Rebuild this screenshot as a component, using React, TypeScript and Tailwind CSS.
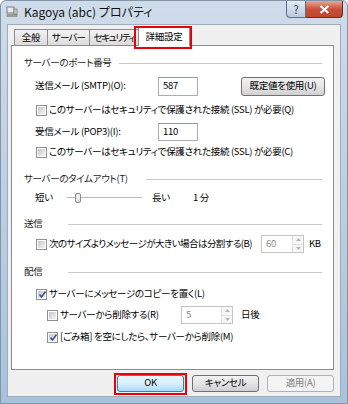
import React from 'react';

const FONT = "font-['Noto_Sans_CJK_JP','Liberation_Sans',sans-serif] [font-feature-settings:'palt']";

function Check({ checked }: { checked?: boolean }) {
  return (
    <span className="relative w-[11px] h-[11px] shrink-0 border border-[#8e8f8f] bg-white flex items-center justify-center">
      <span className="w-[7px] h-[7px] bg-gradient-to-br from-[#c3c7cc] to-[#f4f4f5]" />
      {checked && (
        <svg className="absolute left-[1px] top-[0px]" width="9" height="9" viewBox="0 0 9 9">
          <path d="M1.5 4.5 L3.5 7 L7.5 1.5" fill="none" stroke="#3a5494" strokeWidth="1.6" />
        </svg>
      )}
    </span>
  );
}

function CheckRow({ checked, label, indent }: { checked?: boolean; label: string; indent?: boolean }) {
  return (
    <div className={`flex items-center h-[18px] ${indent ? 'pl-[35px]' : 'pl-[24px]'}`}>
      <Check checked={checked} />
      <span className="ml-[2px] whitespace-nowrap">{label}</span>
    </div>
  );
}

function Header({ label, width, mt }: { label: string; width: string; mt: string }) {
  return (
    <div className={`flex items-center h-[18px] pl-[12px] pr-[11px] ${mt}`}>
      <span className={`${width} shrink-0 whitespace-nowrap text-[#1e1e1e]`}>{label}</span>
      <span className="flex-1 h-px bg-[#c6c8cb]" />
    </div>
  );
}

function Spin({ value, width }: { value: string; width: string }) {
  return (
    <div className={`${width} h-[18px] border border-[#c2c4c8] bg-white flex items-stretch`}>
      <span className="flex-1 pl-[4px] text-[#8d8d8d] flex items-center">{value}</span>
      <div className="w-[11px] flex flex-col border-l border-[#e0e0e0]">
        <span className="flex-1 flex items-center justify-center border-b border-[#e0e0e0] bg-[#f7f7f7]">
          <svg width="5" height="3" viewBox="0 0 5 3"><path d="M0 3 L2.5 0 L5 3Z" fill="#b5b5b5" /></svg>
        </span>
        <span className="flex-1 flex items-center justify-center bg-[#f7f7f7]">
          <svg width="5" height="3" viewBox="0 0 5 3"><path d="M0 0 L2.5 3 L5 0Z" fill="#b5b5b5" /></svg>
        </span>
      </div>
    </div>
  );
}

function Btn({ label, kind }: { label: string; kind?: 'ok' | 'off' }) {
  const style =
    kind === 'ok'
      ? 'border-[#3c7fb1] bg-gradient-to-b from-[#eaf6fd] via-[#d9f0fc] to-[#a7d9f5]'
      : kind === 'off'
        ? 'border-[#adb2b5] bg-[#f4f4f4] text-[#838383]'
        : 'border-[#707070] bg-gradient-to-b from-[#f2f2f2] via-[#e5e5e5] to-[#cfcfcf]';
  return (
    <div className={`w-[67px] h-[17px] rounded-[3px] border flex items-center justify-center whitespace-nowrap ${style}`}>
      {label}
    </div>
  );
}

const tabCls = 'h-[16px] border border-b-0 border-[#898c95] bg-gradient-to-b from-[#f3f3f3] to-[#dcdcdc] flex items-center justify-center whitespace-nowrap';

export default function App() {
  return (
    <div className={`w-[348px] h-[404px] ${FONT} text-[9.5px] tracking-[-0.3px] leading-none text-black bg-gradient-to-b from-[#cfdcea] via-[#bccfe3] to-[#a9c2dc] rounded-t-[6px] border border-[#8194a8] flex flex-col overflow-hidden`}>
      {/* title bar */}
      <div className="h-[22px] flex items-start shrink-0">
        <div className="flex items-center h-[22px] pl-[5px]">
          <svg width="12" height="12" viewBox="0 0 12 12">
            <rect x="1" y="1" width="7" height="6" fill="#e8e8e8" stroke="#7d7d7d" />
            <rect x="0.5" y="8" width="11" height="3" fill="#9b9b9b" />
            <rect x="8" y="3" width="3" height="5" fill="#c9c9c9" stroke="#6e6e6e" strokeWidth="0.6" />
          </svg>
          <span className="ml-[6px] text-[12px] tracking-normal text-[#111]">Kagoya (abc) プロパティ</span>
        </div>
        <div className="ml-auto mr-[4px] flex">
          <div className="w-[20px] h-[17px] rounded-bl-[4px] border border-t-0 border-[#5d6f86] bg-gradient-to-b from-[#e4ecf5] to-[#b9c9dc] flex items-center justify-center text-[11px] text-[#2d3c52]">?</div>
          <div className="w-[37px] h-[17px] rounded-br-[4px] border border-t-0 border-l-0 border-[#6b2a22] bg-gradient-to-b from-[#e4a79b] via-[#c8503a] to-[#c4432d] flex items-center justify-center">
            <svg width="11" height="9" viewBox="0 0 11 9">
              <path d="M1.5 1 L9.5 8 M9.5 1 L1.5 8" stroke="#fff" strokeWidth="2.2" />
            </svg>
          </div>
        </div>
      </div>

      {/* client */}
      <div className="mx-[6px] mt-[1px] h-[373px] bg-[#f0f0f0] border border-[#a0acb8] flex flex-col relative">
        {/* tabs */}
        <div className="h-[20px] flex items-end pl-[6px] relative z-10">
          <div className={`${tabCls} w-[34px]`}>全般</div>
          <div className={`${tabCls} w-[42px] border-l-0 tracking-[-0.8px]`}>サーバー</div>
          <div className={`${tabCls} w-[49px] border-l-0 tracking-[-1.4px]`}>セキュリティ</div>
          <div className="w-[52px] h-[19px] -mb-px -ml-px border border-b-0 border-[#898c95] bg-white flex items-center justify-center whitespace-nowrap">詳細設定</div>
        </div>
        <div className="absolute left-[126px] top-[1px] w-[58px] h-[23px] border-2 border-[#e8000b] z-20" />

        {/* panel */}
        <div className="ml-[3px] mr-[6px] h-[325px] border border-[#898c95] bg-white flex flex-col pt-[8px]">
          <Header label="サーバーのポート番号" width="w-[95px]" mt="" />
          <div className="flex items-center h-[18px] pl-[23px] mt-[5px]">
            <span className="w-[123px] shrink-0 whitespace-nowrap">送信メール (SMTP)(O):</span>
            <span className="w-[40px] h-[19px] border border-[#abadb3] border-t-[#8b9ab1] bg-white pl-[4px] flex items-center">587</span>
            <span className="ml-[43px]">
              <span className="w-[84px] h-[19px] rounded-[3px] border border-[#707070] bg-gradient-to-b from-[#f2f2f2] via-[#e6e6e6] to-[#d0d0d0] flex items-center justify-center whitespace-nowrap">既定値を使用(U)</span>
            </span>
          </div>
          <div className="mt-[6px]"><CheckRow label="このサーバーはセキュリティで保護された接続 (SSL) が必要(Q)" /></div>
          <div className="flex items-center h-[18px] pl-[23px] mt-[4px]">
            <span className="w-[123px] shrink-0 whitespace-nowrap">受信メール (POP3)(I):</span>
            <span className="w-[40px] h-[18px] border border-[#abadb3] border-t-[#8b9ab1] bg-white pl-[4px] flex items-center">110</span>
          </div>
          <div className="mt-[2px]"><CheckRow label="このサーバーはセキュリティで保護された接続 (SSL) が必要(C)" /></div>

          <Header label="サーバーのタイムアウト(T)" width="w-[122px]" mt="mt-[9px]" />
          <div className="flex items-center h-[18px] pl-[23px] mt-[1px]">
            <span className="w-[32px] shrink-0">短い</span>
            <div className="relative w-[75px] h-[12px] flex items-center">
              <span className="w-full h-[2px] bg-[#b8b8b8] border-b border-white" />
              <span className="absolute left-[8px] top-[1px] w-[6px] h-[10px] rounded-[2px] border border-[#8a8a8a] bg-gradient-to-b from-[#fbfbfb] to-[#dedede]" />
            </div>
            <span className="ml-[10px] w-[41px] shrink-0">長い</span>
            <span className="whitespace-nowrap">1 分</span>
          </div>

          <Header label="送信" width="w-[44px]" mt="mt-[8px]" />
          <div className="flex items-center h-[18px] pl-[24px] mt-[2px]">
            <Check />
            <span className="ml-[2px] w-[212px] shrink-0 whitespace-nowrap tracking-[-0.55px]">次のサイズよりメッセージが大きい場合は分割する(B)</span>
            <Spin value="60" width="w-[43px]" />
            <span className="ml-[5px]">KB</span>
          </div>

          <Header label="配信" width="w-[44px]" mt="mt-[10px]" />
          <div className="mt-[4px]"><CheckRow checked label="サーバーにメッセージのコピーを置く(L)" /></div>
          <div className="flex items-center h-[18px] pl-[35px] mt-[3px]">
            <Check />
            <span className="ml-[2px] w-[121px] shrink-0 whitespace-nowrap">サーバーから削除する(R)</span>
            <Spin value="5" width="w-[52px]" />
            <span className="ml-[8px]">日後</span>
          </div>
          <div className="mt-[4px]"><CheckRow checked indent label="[ごみ箱] を空にしたら、サーバーから削除(M)" /></div>
        </div>

        {/* buttons */}
        <div className="flex-1 flex items-center justify-end gap-[8px] pr-[6px] relative">
          <div className="relative">
            <Btn label="OK" kind="ok" />
            <div className="absolute -left-[3px] -top-[2px] w-[73px] h-[22px] border-2 border-[#e8000b]" />
          </div>
          <Btn label="キャンセル" />
          <Btn label="適用(A)" kind="off" />
        </div>
      </div>
    </div>
  );
}
